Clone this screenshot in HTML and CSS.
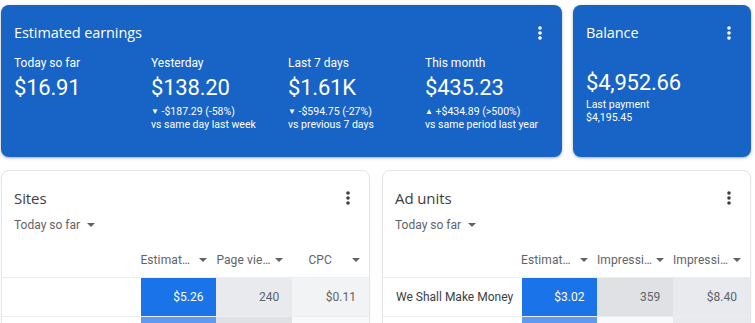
FILE: index.html
```html
<!DOCTYPE html>
<html lang="en">
<head>
    <meta charset="UTF-8">
    <meta name="viewport" content="width=device-width, initial-scale=1.0">
    <title>AdSense - Home</title>
    <link rel="stylesheet" href="styles.css">
</head>
<body>
    <div class="page">
        <div class="top-row">
            <div class="card blue earnings">
                <div class="card-head">
                    <h2 class="card-title">Estimated earnings</h2>
                    <svg class="kebab" width="20" height="20" viewBox="0 0 20 20"><circle cx="10" cy="5" r="1.8"/><circle cx="10" cy="10" r="1.8"/><circle cx="10" cy="15" r="1.8"/></svg>
                </div>
                <div class="stats">
                    <div class="stat">
                        <p class="stat-label">Today so far</p>
                        <p class="stat-value">$16.91</p>
                    </div>
                    <div class="stat">
                        <p class="stat-label">Yesterday</p>
                        <p class="stat-value">$138.20</p>
                        <p class="stat-note"><span class="tri">&#9660;</span> -$187.29 (-58%)</p>
                        <p class="stat-note">vs same day last week</p>
                    </div>
                    <div class="stat">
                        <p class="stat-label">Last 7 days</p>
                        <p class="stat-value">$1.61K</p>
                        <p class="stat-note"><span class="tri">&#9660;</span> -$594.75 (-27%)</p>
                        <p class="stat-note">vs previous 7 days</p>
                    </div>
                    <div class="stat">
                        <p class="stat-label">This month</p>
                        <p class="stat-value">$435.23</p>
                        <p class="stat-note"><span class="tri">&#9650;</span> +$434.89 (&gt;500%)</p>
                        <p class="stat-note">vs same period last year</p>
                    </div>
                </div>
            </div>
            <div class="card blue balance">
                <div class="card-head">
                    <h2 class="card-title">Balance</h2>
                    <svg class="kebab" width="20" height="20" viewBox="0 0 20 20"><circle cx="10" cy="5" r="1.8"/><circle cx="10" cy="10" r="1.8"/><circle cx="10" cy="15" r="1.8"/></svg>
                </div>
                <p class="stat-value balance-value">$4,952.66</p>
                <p class="stat-note">Last payment</p>
                <p class="stat-note">$4,195.45</p>
            </div>
        </div>

        <div class="bottom-row">
            <div class="card white">
                <div class="card-head">
                    <h2 class="card-title">Sites</h2>
                    <svg class="kebab" width="20" height="20" viewBox="0 0 20 20"><circle cx="10" cy="5" r="1.8"/><circle cx="10" cy="10" r="1.8"/><circle cx="10" cy="15" r="1.8"/></svg>
                </div>
                <div class="range">Today so far <span class="caret"></span></div>
                <div class="table">
                    <div class="row head">
                        <div class="cell name"></div>
                        <div class="cell"><span class="htext">Estimated earnings</span><span class="caret"></span></div>
                        <div class="cell"><span class="htext">Page views</span><span class="caret"></span></div>
                        <div class="cell"><span class="htext center">CPC</span><span class="caret"></span></div>
                    </div>
                    <div class="row">
                        <div class="cell name"></div>
                        <div class="cell num blue1">$5.26</div>
                        <div class="cell num grey2">240</div>
                        <div class="cell num grey1">$0.11</div>
                    </div>
                    <div class="row">
                        <div class="cell name"></div>
                        <div class="cell num blue2"></div>
                        <div class="cell num grey3"></div>
                        <div class="cell num grey0"></div>
                    </div>
                </div>
            </div>
            <div class="card white">
                <div class="card-head">
                    <h2 class="card-title">Ad units</h2>
                    <svg class="kebab" width="20" height="20" viewBox="0 0 20 20"><circle cx="10" cy="5" r="1.8"/><circle cx="10" cy="10" r="1.8"/><circle cx="10" cy="15" r="1.8"/></svg>
                </div>
                <div class="range">Today so far <span class="caret"></span></div>
                <div class="table">
                    <div class="row head">
                        <div class="cell name"></div>
                        <div class="cell"><span class="htext">Estimated earnings</span><span class="caret"></span></div>
                        <div class="cell"><span class="htext">Impressions</span><span class="caret"></span></div>
                        <div class="cell"><span class="htext">Impression RPM</span><span class="caret"></span></div>
                    </div>
                    <div class="row">
                        <div class="cell name">We Shall Make Money</div>
                        <div class="cell num blue1">$3.02</div>
                        <div class="cell num grey3">359</div>
                        <div class="cell num grey2">$8.40</div>
                    </div>
                    <div class="row">
                        <div class="cell name"></div>
                        <div class="cell num blue2"></div>
                        <div class="cell num grey0"></div>
                        <div class="cell num grey2"></div>
                    </div>
                </div>
            </div>
        </div>
    </div>
</body>
</html>
```

FILE: styles.css
```css
* {
  margin: 0;
  padding: 0;
  box-sizing: border-box;
}

body {
  background-color: #ffffff;
  font-family: Roboto, "Liberation Sans", sans-serif;
  overflow: hidden;
}

.page {
  padding: 5px 4px 0 1px;
}

.top-row {
  display: flex;
  gap: 11px;
  height: 152px;
}

.bottom-row {
  display: flex;
  gap: 12px;
  margin-top: 13px;
}

.card {
  border-radius: 8px;
}

.card.blue {
  background-color: #1763c6;
  color: #ffffff;
  padding: 18px 13px 0 13px;
  box-shadow: 0 1px 2px rgba(60, 64, 67, 0.3), 0 1px 3px 1px rgba(60, 64, 67, 0.12);
}

.earnings {
  width: 561px;
}

.balance {
  width: 178px;
}

.card.white {
  flex: 1;
  height: 170px;
  background-color: #ffffff;
  border: 1px solid #e4e5e7;
  padding-top: 17px;
  overflow: hidden;
  box-shadow: 0 1px 2px rgba(60, 64, 67, 0.08);
}

.card-head {
  display: flex;
  justify-content: space-between;
  align-items: center;
  height: 20px;
}

.card.white .card-head {
  padding: 0 12px 0 12px;
}

.card-title {
  font-family: "Open Sans", Roboto, sans-serif;
  font-size: 14.5px;
  font-weight: 400;
  line-height: 20px;
  letter-spacing: -0.1px;
}

.card.white .card-title {
  color: #3c4043;
  font-size: 15px;
}

.kebab {
  fill: #ffffff;
  margin-right: -1px;
}

.card.white .kebab {
  fill: #3c4043;
}

/* stats */
.stats {
  display: flex;
  margin-top: 12px;
}

.stat {
  flex: none;
  width: 137px;
}

.stat-label {
  font-size: 12px;
  line-height: 16px;
}

.stat-value {
  font-size: 22px;
  line-height: 28px;
  margin-top: 3px;
  margin-bottom: 4px;
  letter-spacing: -0.2px;
}

.balance-value {
  margin-top: 26px;
  margin-bottom: 2px;
}

.stat-note {
  font-size: 10.5px;
  line-height: 12.5px;
}

.tri {
  font-size: 8px;
  vertical-align: 1px;
}

/* table cards */
.range {
  display: flex;
  align-items: center;
  gap: 7px;
  color: #5f6368;
  font-size: 12px;
  line-height: 16px;
  padding-left: 12px;
  margin-top: 9px;
}

.caret {
  display: inline-block;
  width: 0;
  height: 0;
  border-left: 4.5px solid transparent;
  border-right: 4.5px solid transparent;
  border-top: 4.5px solid #5f6368;
  flex: none;
}

.table {
  margin-top: 13px;
}

.row {
  display: flex;
  height: 39px;
  border-bottom: 1px solid #ebedef;
}

.row.head {
  height: 32px;
  align-items: flex-start;
  padding-top: 5px;
}

.cell {
  width: 76px;
  display: flex;
  align-items: center;
  font-size: 12px;
  color: #5f6368;
}

.cell:last-child {
  width: 77px;
}

.cell.name {
  width: 139px;
  padding-left: 13px;
  color: #3c4043;
}

.head .cell {
  height: 18px;
  padding-right: 9px;
  gap: 4px;
}

.htext {
  flex: 1;
  min-width: 0;
  white-space: nowrap;
  overflow: hidden;
  text-overflow: ellipsis;
  letter-spacing: 0.1px;
}

.htext.center {
  text-align: center;
}

.cell.num {
  justify-content: flex-end;
  padding-right: 13px;
  height: 38px;
}

.blue1 {
  background-color: #1a73e8;
  color: #ffffff !important;
}

.blue2 {
  background-color: #5f9af0;
}

.grey0 {
  background-color: #f8f9fa;
}

.grey1 {
  background-color: #f1f3f4;
}

.grey2 {
  background-color: #e8eaed;
}

.grey3 {
  background-color: #dfe1e4;
}
```
